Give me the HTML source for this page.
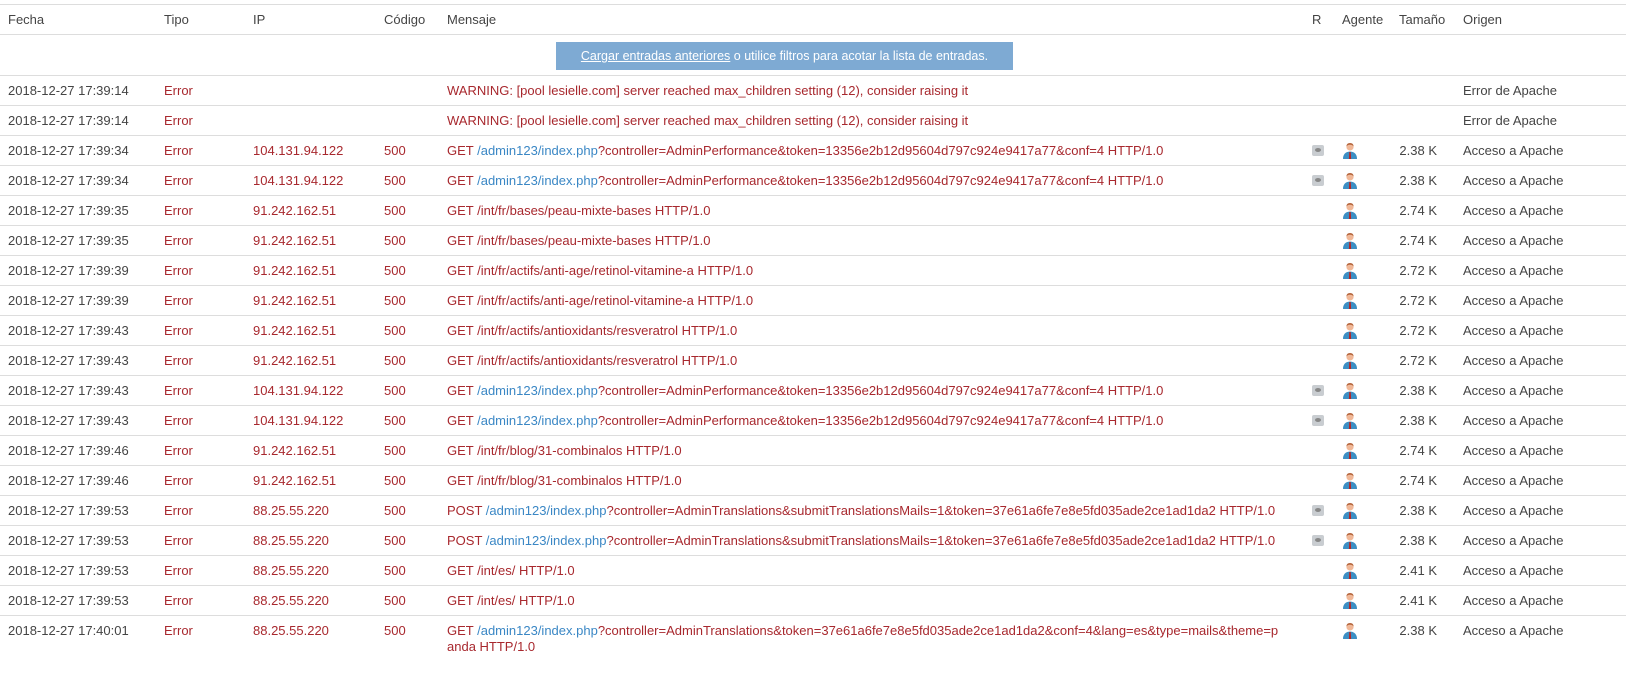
<!DOCTYPE html>
<html><head><meta charset="utf-8"><style>
body{margin:0;width:1626px;height:684px;overflow:hidden;background:#fff;font-family:"Liberation Sans",sans-serif;font-size:13px;letter-spacing:0;color:#444}
.row{position:absolute;left:0;width:1626px;height:29px;border-bottom:1px solid #ddd;white-space:nowrap}
.row>span{position:absolute;top:0;line-height:29px}
.c1{left:8px}.c2{left:164px}.c3{left:253px}.c4{left:384px}.c5{left:447px}.c6{left:1312px}.c7{left:1342px}.c8{right:189px}.c9{left:1463px}
.r{color:#a8282e}
a{color:#3a87c5;text-decoration:none}
.btn{position:absolute;left:556px;top:42px;width:457px;height:28px;line-height:28px;background:#7eaad3;color:#fff;text-align:center;font-size:12.5px}
.eye{display:inline-block;width:12px;height:11px;background:#c9cdd1;border-radius:2px;position:relative;vertical-align:middle;margin-top:-2px}
.eye:after{content:"";position:absolute;left:3px;top:3px;width:6px;height:4px;border-radius:50%;background:#888}
.ag{display:inline-block;width:16px;height:17px;vertical-align:middle;margin-top:-3px}
</style></head><body>
<svg width="0" height="0" style="position:absolute"><defs><g id="p"><circle cx="8" cy="5" r="3.6" fill="#f0b898"/><path d="M4.4 4.5Q4.5 1 8 1T11.6 4.5Q10 2.5 8 2.8 6 2.5 4.4 4.5Z" fill="#b5653c"/><path d="M1 17Q1 10 8 9.5 15 10 15 17Z" fill="#3c8fc4"/><path d="M7.3 10h1.4l.4 7h-2.2Z" fill="#b22"/></g></defs></svg>
<div class="row" style="top:4px;border-top:1px solid #ddd"><span class="c1">Fecha</span><span class="c2">Tipo</span><span class="c3">IP</span><span class="c4">Código</span><span class="c5">Mensaje</span><span class="c6">R</span><span class="c7">Agente</span><span style="left:1399px">Tamaño</span><span class="c9">Origen</span></div>
<div class="row" style="top:35px;height:40px"></div>
<div class="btn"><u>Cargar entradas anteriores</u> o utilice filtros para acotar la lista de entradas.</div>

<div class="row" style="top:76px"><span class="c1">2018-12-27 17:39:14</span><span class="c2 r">Error</span><span class="c5 r">WARNING: [pool lesielle.com] server reached max_children setting (12), consider raising it</span><span class="c9">Error de Apache</span></div>
<div class="row" style="top:106px"><span class="c1">2018-12-27 17:39:14</span><span class="c2 r">Error</span><span class="c5 r">WARNING: [pool lesielle.com] server reached max_children setting (12), consider raising it</span><span class="c9">Error de Apache</span></div>
<div class="row" style="top:136px"><span class="c1">2018-12-27 17:39:34</span><span class="c2 r">Error</span><span class="c3 r">104.131.94.122</span><span class="c4 r">500</span><span class="c5 r">GET <a>/admin123/index.php</a>?controller=AdminPerformance&amp;token=13356e2b12d95604d797c924e9417a77&amp;conf=4 HTTP/1.0</span><span class="c6"><i class="eye"></i></span><span class="c7"><svg class="ag" viewBox="0 0 16 17"><use href="#p"/></svg></span><span class="c8">2.38 K</span><span class="c9">Acceso a Apache</span></div>
<div class="row" style="top:166px"><span class="c1">2018-12-27 17:39:34</span><span class="c2 r">Error</span><span class="c3 r">104.131.94.122</span><span class="c4 r">500</span><span class="c5 r">GET <a>/admin123/index.php</a>?controller=AdminPerformance&amp;token=13356e2b12d95604d797c924e9417a77&amp;conf=4 HTTP/1.0</span><span class="c6"><i class="eye"></i></span><span class="c7"><svg class="ag" viewBox="0 0 16 17"><use href="#p"/></svg></span><span class="c8">2.38 K</span><span class="c9">Acceso a Apache</span></div>
<div class="row" style="top:196px"><span class="c1">2018-12-27 17:39:35</span><span class="c2 r">Error</span><span class="c3 r">91.242.162.51</span><span class="c4 r">500</span><span class="c5 r">GET /int/fr/bases/peau-mixte-bases HTTP/1.0</span><span class="c7"><svg class="ag" viewBox="0 0 16 17"><use href="#p"/></svg></span><span class="c8">2.74 K</span><span class="c9">Acceso a Apache</span></div>
<div class="row" style="top:226px"><span class="c1">2018-12-27 17:39:35</span><span class="c2 r">Error</span><span class="c3 r">91.242.162.51</span><span class="c4 r">500</span><span class="c5 r">GET /int/fr/bases/peau-mixte-bases HTTP/1.0</span><span class="c7"><svg class="ag" viewBox="0 0 16 17"><use href="#p"/></svg></span><span class="c8">2.74 K</span><span class="c9">Acceso a Apache</span></div>
<div class="row" style="top:256px"><span class="c1">2018-12-27 17:39:39</span><span class="c2 r">Error</span><span class="c3 r">91.242.162.51</span><span class="c4 r">500</span><span class="c5 r">GET /int/fr/actifs/anti-age/retinol-vitamine-a HTTP/1.0</span><span class="c7"><svg class="ag" viewBox="0 0 16 17"><use href="#p"/></svg></span><span class="c8">2.72 K</span><span class="c9">Acceso a Apache</span></div>
<div class="row" style="top:286px"><span class="c1">2018-12-27 17:39:39</span><span class="c2 r">Error</span><span class="c3 r">91.242.162.51</span><span class="c4 r">500</span><span class="c5 r">GET /int/fr/actifs/anti-age/retinol-vitamine-a HTTP/1.0</span><span class="c7"><svg class="ag" viewBox="0 0 16 17"><use href="#p"/></svg></span><span class="c8">2.72 K</span><span class="c9">Acceso a Apache</span></div>
<div class="row" style="top:316px"><span class="c1">2018-12-27 17:39:43</span><span class="c2 r">Error</span><span class="c3 r">91.242.162.51</span><span class="c4 r">500</span><span class="c5 r">GET /int/fr/actifs/antioxidants/resveratrol HTTP/1.0</span><span class="c7"><svg class="ag" viewBox="0 0 16 17"><use href="#p"/></svg></span><span class="c8">2.72 K</span><span class="c9">Acceso a Apache</span></div>
<div class="row" style="top:346px"><span class="c1">2018-12-27 17:39:43</span><span class="c2 r">Error</span><span class="c3 r">91.242.162.51</span><span class="c4 r">500</span><span class="c5 r">GET /int/fr/actifs/antioxidants/resveratrol HTTP/1.0</span><span class="c7"><svg class="ag" viewBox="0 0 16 17"><use href="#p"/></svg></span><span class="c8">2.72 K</span><span class="c9">Acceso a Apache</span></div>
<div class="row" style="top:376px"><span class="c1">2018-12-27 17:39:43</span><span class="c2 r">Error</span><span class="c3 r">104.131.94.122</span><span class="c4 r">500</span><span class="c5 r">GET <a>/admin123/index.php</a>?controller=AdminPerformance&amp;token=13356e2b12d95604d797c924e9417a77&amp;conf=4 HTTP/1.0</span><span class="c6"><i class="eye"></i></span><span class="c7"><svg class="ag" viewBox="0 0 16 17"><use href="#p"/></svg></span><span class="c8">2.38 K</span><span class="c9">Acceso a Apache</span></div>
<div class="row" style="top:406px"><span class="c1">2018-12-27 17:39:43</span><span class="c2 r">Error</span><span class="c3 r">104.131.94.122</span><span class="c4 r">500</span><span class="c5 r">GET <a>/admin123/index.php</a>?controller=AdminPerformance&amp;token=13356e2b12d95604d797c924e9417a77&amp;conf=4 HTTP/1.0</span><span class="c6"><i class="eye"></i></span><span class="c7"><svg class="ag" viewBox="0 0 16 17"><use href="#p"/></svg></span><span class="c8">2.38 K</span><span class="c9">Acceso a Apache</span></div>
<div class="row" style="top:436px"><span class="c1">2018-12-27 17:39:46</span><span class="c2 r">Error</span><span class="c3 r">91.242.162.51</span><span class="c4 r">500</span><span class="c5 r">GET /int/fr/blog/31-combinalos HTTP/1.0</span><span class="c7"><svg class="ag" viewBox="0 0 16 17"><use href="#p"/></svg></span><span class="c8">2.74 K</span><span class="c9">Acceso a Apache</span></div>
<div class="row" style="top:466px"><span class="c1">2018-12-27 17:39:46</span><span class="c2 r">Error</span><span class="c3 r">91.242.162.51</span><span class="c4 r">500</span><span class="c5 r">GET /int/fr/blog/31-combinalos HTTP/1.0</span><span class="c7"><svg class="ag" viewBox="0 0 16 17"><use href="#p"/></svg></span><span class="c8">2.74 K</span><span class="c9">Acceso a Apache</span></div>
<div class="row" style="top:496px"><span class="c1">2018-12-27 17:39:53</span><span class="c2 r">Error</span><span class="c3 r">88.25.55.220</span><span class="c4 r">500</span><span class="c5 r">POST <a>/admin123/index.php</a>?controller=AdminTranslations&amp;submitTranslationsMails=1&amp;token=37e61a6fe7e8e5fd035ade2ce1ad1da2 HTTP/1.0</span><span class="c6"><i class="eye"></i></span><span class="c7"><svg class="ag" viewBox="0 0 16 17"><use href="#p"/></svg></span><span class="c8">2.38 K</span><span class="c9">Acceso a Apache</span></div>
<div class="row" style="top:526px"><span class="c1">2018-12-27 17:39:53</span><span class="c2 r">Error</span><span class="c3 r">88.25.55.220</span><span class="c4 r">500</span><span class="c5 r">POST <a>/admin123/index.php</a>?controller=AdminTranslations&amp;submitTranslationsMails=1&amp;token=37e61a6fe7e8e5fd035ade2ce1ad1da2 HTTP/1.0</span><span class="c6"><i class="eye"></i></span><span class="c7"><svg class="ag" viewBox="0 0 16 17"><use href="#p"/></svg></span><span class="c8">2.38 K</span><span class="c9">Acceso a Apache</span></div>
<div class="row" style="top:556px"><span class="c1">2018-12-27 17:39:53</span><span class="c2 r">Error</span><span class="c3 r">88.25.55.220</span><span class="c4 r">500</span><span class="c5 r">GET /int/es/ HTTP/1.0</span><span class="c7"><svg class="ag" viewBox="0 0 16 17"><use href="#p"/></svg></span><span class="c8">2.41 K</span><span class="c9">Acceso a Apache</span></div>
<div class="row" style="top:586px"><span class="c1">2018-12-27 17:39:53</span><span class="c2 r">Error</span><span class="c3 r">88.25.55.220</span><span class="c4 r">500</span><span class="c5 r">GET /int/es/ HTTP/1.0</span><span class="c7"><svg class="ag" viewBox="0 0 16 17"><use href="#p"/></svg></span><span class="c8">2.41 K</span><span class="c9">Acceso a Apache</span></div>
<div class="row" style="top:616px;height:80px;border:0"><span class="c1">2018-12-27 17:40:01</span><span class="c2 r">Error</span><span class="c3 r">88.25.55.220</span><span class="c4 r">500</span><span class="c5 r" style="line-height:16px;top:7px">GET <a>/admin123/index.php</a>?controller=AdminTranslations&amp;token=37e61a6fe7e8e5fd035ade2ce1ad1da2&amp;conf=4&amp;lang=es&amp;type=mails&amp;theme=p<br>anda HTTP/1.0</span><span class="c7"><svg class="ag" viewBox="0 0 16 17"><use href="#p"/></svg></span><span class="c8">2.38 K</span><span class="c9">Acceso a Apache</span></div>
</body></html>
